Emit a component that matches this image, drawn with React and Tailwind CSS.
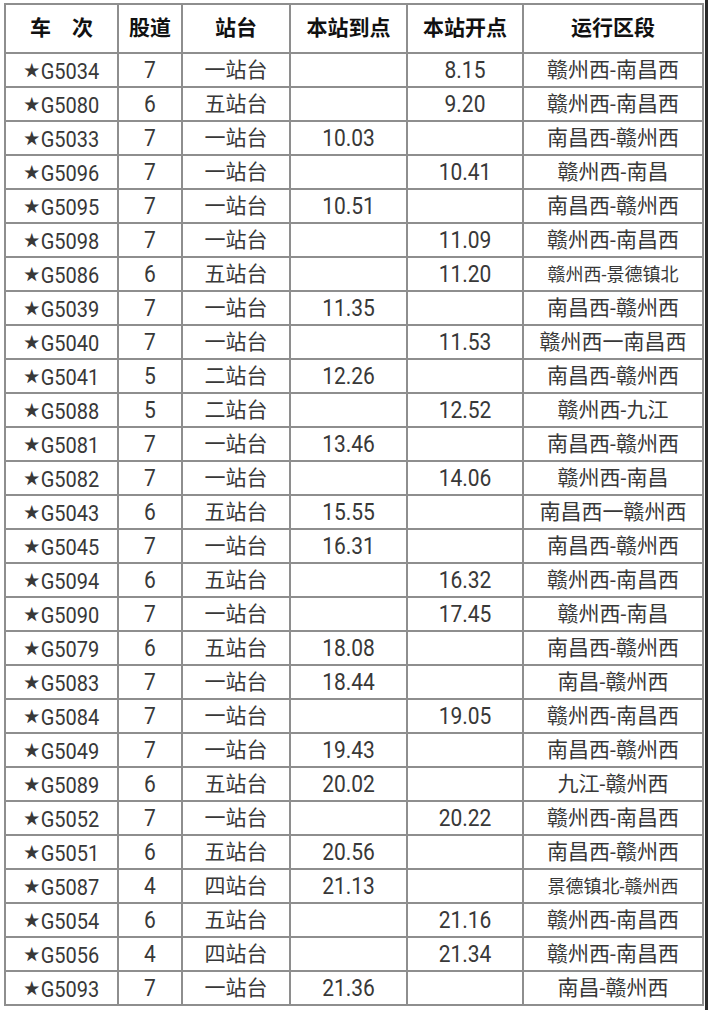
const rows = [
  ["G5034", "7", "一站台", "", "8.15", "赣州西-南昌西"],
  ["G5080", "6", "五站台", "", "9.20", "赣州西-南昌西"],
  ["G5033", "7", "一站台", "10.03", "", "南昌西-赣州西"],
  ["G5096", "7", "一站台", "", "10.41", "赣州西-南昌"],
  ["G5095", "7", "一站台", "10.51", "", "南昌西-赣州西"],
  ["G5098", "7", "一站台", "", "11.09", "赣州西-南昌西"],
  ["G5086", "6", "五站台", "", "11.20", "赣州西-景德镇北", true],
  ["G5039", "7", "一站台", "11.35", "", "南昌西-赣州西"],
  ["G5040", "7", "一站台", "", "11.53", "赣州西一南昌西"],
  ["G5041", "5", "二站台", "12.26", "", "南昌西-赣州西"],
  ["G5088", "5", "二站台", "", "12.52", "赣州西-九江"],
  ["G5081", "7", "一站台", "13.46", "", "南昌西-赣州西"],
  ["G5082", "7", "一站台", "", "14.06", "赣州西-南昌"],
  ["G5043", "6", "五站台", "15.55", "", "南昌西一赣州西"],
  ["G5045", "7", "一站台", "16.31", "", "南昌西-赣州西"],
  ["G5094", "6", "五站台", "", "16.32", "赣州西-南昌西"],
  ["G5090", "7", "一站台", "", "17.45", "赣州西-南昌"],
  ["G5079", "6", "五站台", "18.08", "", "南昌西-赣州西"],
  ["G5083", "7", "一站台", "18.44", "", "南昌-赣州西"],
  ["G5084", "7", "一站台", "", "19.05", "赣州西-南昌西"],
  ["G5049", "7", "一站台", "19.43", "", "南昌西-赣州西"],
  ["G5089", "6", "五站台", "20.02", "", "九江-赣州西"],
  ["G5052", "7", "一站台", "", "20.22", "赣州西-南昌西"],
  ["G5051", "6", "五站台", "20.56", "", "南昌西-赣州西"],
  ["G5087", "4", "四站台", "21.13", "", "景德镇北-赣州西", true],
  ["G5054", "6", "五站台", "", "21.16", "赣州西-南昌西"],
  ["G5056", "4", "四站台", "", "21.34", "赣州西-南昌西"],
  ["G5093", "7", "一站台", "21.36", "", "南昌-赣州西"],
];

const headers = ["车　次", "股道", "站台", "本站到点", "本站开点", "运行区段"];

const font = { fontFamily: 'Roboto, "Noto Sans CJK SC", sans-serif' };

export default function App() {
  return (
    <div className="w-[708px] h-[1010px] bg-white flex overflow-hidden" style={font}>
      <div className="pt-[3px] pl-[4px]">
        <div className="grid grid-cols-[111px_62px_106px_115px_114px_178px] grid-rows-[47px_repeat(28,32px)] gap-[2px] p-[2px] bg-[#8e8e8e]">
          {headers.map((h) => (
            <div key={h} className="bg-white flex items-center justify-center text-[21px] font-bold text-[#111]">
              {h}
            </div>
          ))}
          {rows.map((r, i) => (
            <Row key={i} r={r} />
          ))}
        </div>
      </div>
      <div className="flex-1 flex justify-end">
        <div className="w-[3px] h-full bg-[#2a2a2a]"></div>
      </div>
    </div>
  );
}

function Row({ r }) {
  const cell = "bg-white flex items-center justify-center text-[#383838] pt-[1px] ";
  return (
    <>
      <div className={cell + "text-[20px]"}>
        <span className="text-[16px] mr-[1px]">★</span>
        <span className="inline-block scale-y-110">{r[0]}</span>
      </div>
      <div className={cell + "text-[21px]"}>
        <span className="inline-block scale-y-110">{r[1]}</span>
      </div>
      <div className={cell + "text-[21px]"}>{r[2]}</div>
      <div className={cell + "text-[21px]"}>
        <span className="inline-block scale-y-110">{r[3]}</span>
      </div>
      <div className={cell + "text-[21px]"}>
        <span className="inline-block scale-y-110">{r[4]}</span>
      </div>
      <div className={cell + (r[6] ? "text-[18px]" : "text-[21px]")}>{r[5]}</div>
    </>
  );
}
